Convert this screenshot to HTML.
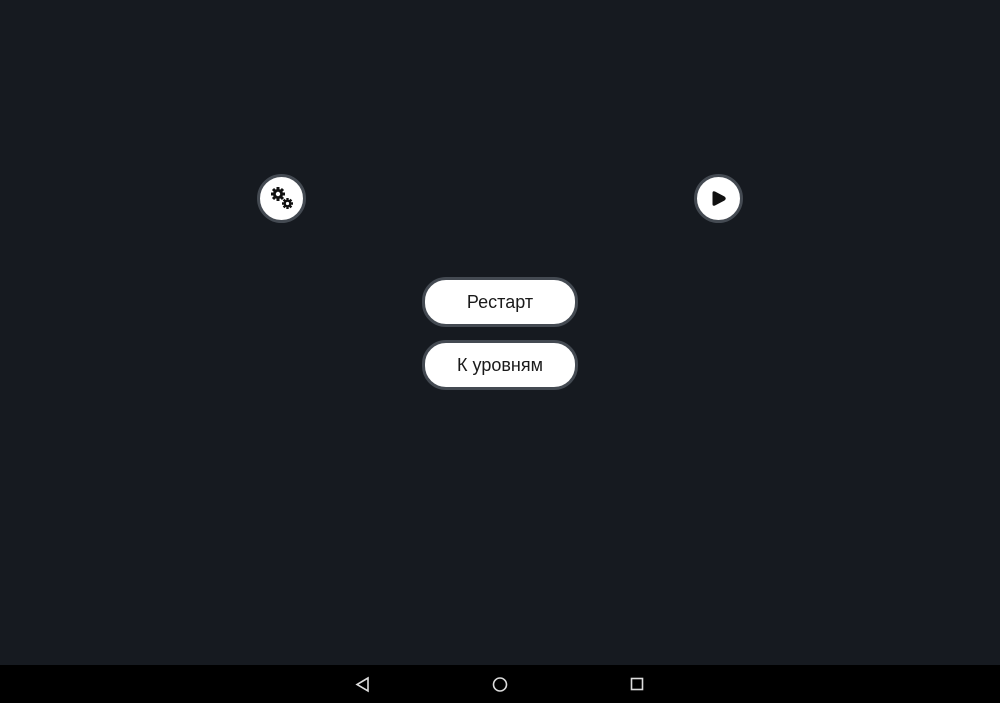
<!DOCTYPE html><html><head><style>
html,body{margin:0;width:1000px;height:703px;overflow:hidden}
body{background:#161a20;position:relative;font-family:"Liberation Sans","DejaVu Sans",sans-serif}
.c{position:absolute;width:43px;height:43px;border-radius:50%;background:#fff;border:3px solid #444a52}
.b{position:absolute;left:422px;width:150px;height:44px;border-radius:24px;background:#fff;border:3px solid #444a52;text-align:center;line-height:44px;font-size:18px;color:#1a1a1a}
.nav{position:absolute;left:0;top:665px;width:1000px;height:38px;background:#000}
</style></head><body>
<div class="c" style="left:257px;top:174px"><svg width="43" height="43" viewBox="0 0 43 43">
<g fill="#111"><circle cx="18" cy="17" r="5"/><g stroke="#111" stroke-width="3"><path d="M18 10v14M11 17h14M13 12l10 10M23 12L13 22"/></g><circle cx="27.5" cy="26.5" r="3.8"/><g stroke="#111" stroke-width="2.4"><path d="M27.5 21v11M22 26.5h11M23.6 22.6l7.8 7.8M31.4 22.6l-7.8 7.8"/></g></g>
<circle cx="18" cy="17" r="2.2" fill="#fff"/><circle cx="27.5" cy="26.5" r="1.6" fill="#fff"/></svg></div>
<div class="c" style="left:694px;top:174px"><svg width="43" height="43" viewBox="0 0 43 43"><path d="M15.5 16Q15.5 13.5 18 14.5L27.5 19.5Q30 21.5 27.5 23.5L18 28.5Q15.5 29.5 15.5 27Z" fill="#111"/></svg></div>
<div class="b" style="top:277px">Рестарт</div>
<div class="b" style="top:340px">К уровням</div>
<div class="nav"><svg width="1000" height="38"><g fill="none" stroke="#ddd" stroke-width="1.6"><path d="M368 13L357 19.5 368 26Z"/><circle cx="500" cy="19.5" r="6.5"/><rect x="631.5" y="13.5" width="11" height="11"/></g></svg></div>
</body></html>
